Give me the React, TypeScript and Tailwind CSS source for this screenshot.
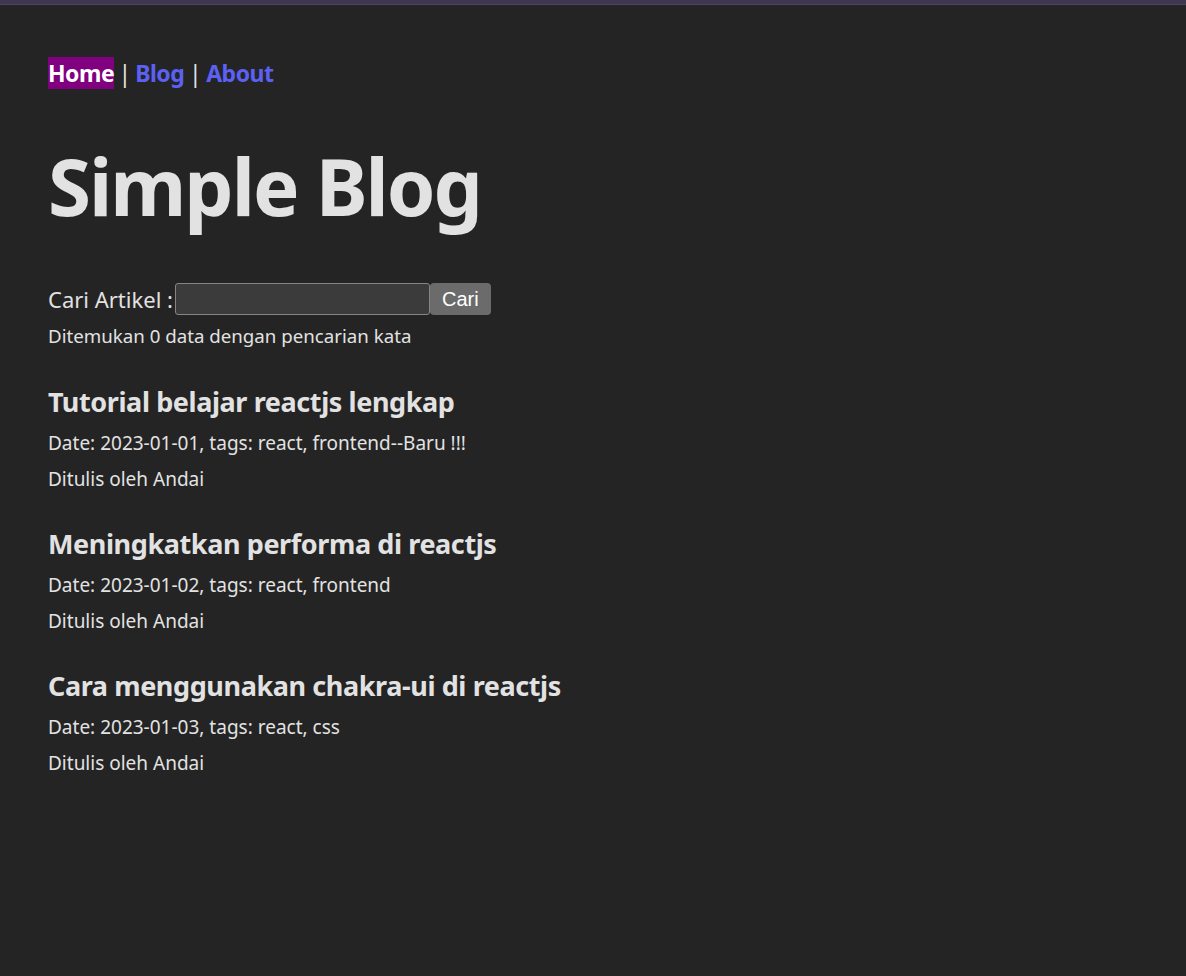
const posts = [
  { title: "Tutorial belajar reactjs lengkap", date: "2023-01-01", tags: "react, frontend", isNew: true },
  { title: "Meningkatkan performa di reactjs", date: "2023-01-02", tags: "react, frontend", isNew: false },
  { title: "Cara menggunakan chakra-ui di reactjs", date: "2023-01-03", tags: "react, css", isNew: false },
];

export default function App() {
  return (
    <div className="min-h-screen bg-[#242424] text-[#e2e2e2] font-['Noto_Sans',sans-serif]">
      <div className="h-[5px] bg-[#3f3650] border-b border-[#4d4462]"></div>

      <div className="px-12 pt-[52px]">
        {/* Nav */}
        <nav className="text-[23px] leading-[32px] font-bold tracking-[-0.5px]">
          <a href="#" className="bg-[#800080] text-white">Home</a>
          <span className="inline-block w-[21px] text-center font-normal">|</span>
          <a href="#" className="text-[#5c61f4]">Blog</a>
          <span className="inline-block w-[22px] text-center font-normal">|</span>
          <a href="#" className="text-[#5c61f4]">About</a>
        </nav>

        <h1 className="mt-[53px] text-[78px] leading-[89px] font-bold tracking-[-2px]">Simple Blog</h1>

        {/* Search */}
        <div className="mt-[52px] flex items-center h-8">
          <label className="text-[22px] leading-8">Cari Artikel :</label>
          <input
            type="text"
            className="ml-[2px] w-[255px] h-8 bg-[#3b3b3b] border border-[#858585] rounded-[3px] outline-none"
          />
          <button className="h-8 px-3 bg-[#6b6b6b] text-white rounded-[4px] text-[20px] font-['Liberation_Sans',Arial,sans-serif]">
            Cari
          </button>
        </div>
        <p className="mt-[7px] text-[18.7px] leading-[27px]">Ditemukan 0 data dengan pencarian kata</p>

        {/* Posts */}
        <div className="mt-[35px] flex flex-col gap-[29px]">
          {posts.map((p) => (
            <div key={p.title}>
              <h3 className="text-[27px] leading-[35px] font-bold tracking-[-0.4px]">{p.title}</h3>
              <div className="mt-[6px] text-[19px] leading-[36px]">
                <p>
                  Date: {p.date}, tags: {p.tags}
                  {p.isNew ? "--Baru !!!" : ""}
                </p>
                <p>Ditulis oleh Andai</p>
              </div>
            </div>
          ))}
        </div>
      </div>
    </div>
  );
}
